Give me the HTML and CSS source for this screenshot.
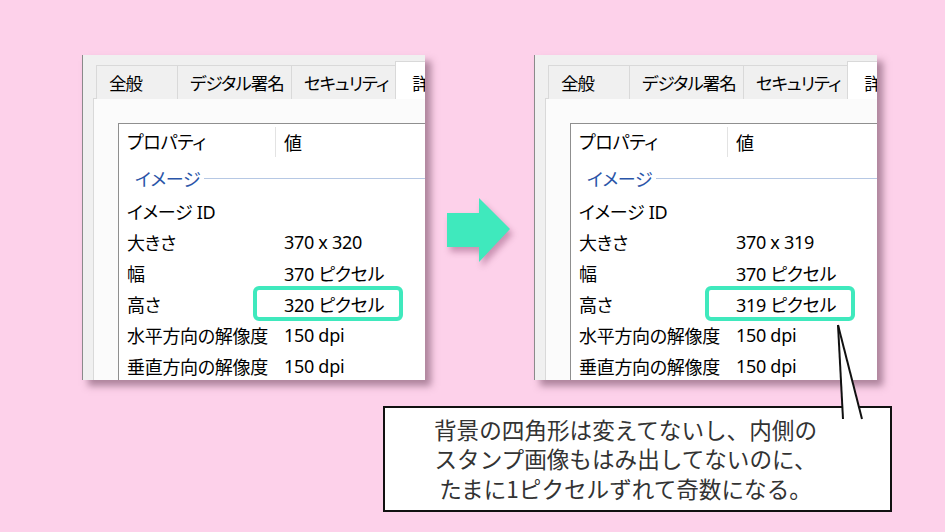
FILE: index.html
```html
<!DOCTYPE html>
<html lang="ja">
<head>
    <meta charset="UTF-8">
    <meta name="viewport" content="width=device-width, initial-scale=1.0">
    <title>プロパティの比較</title>
    <link rel="stylesheet" href="styles.css">
</head>
<body>
    <div class="stage">
        <div class="row">
            <!-- 変更前のプロパティ -->
            <div class="dialog">
                <div class="tabs">
                    <span class="tab">全般</span>
                    <span class="tab">デジタル署名</span>
                    <span class="tab">セキュリティ</span>
                    <span class="tab active">詳細</span>
                </div>
                <div class="page">
                    <div class="list">
                        <div class="list-head"><span class="col-name">プロパティ</span><span class="col-value">値</span></div>
                        <div class="group"><span>イメージ</span></div>
                        <div class="item"><span class="col-name">イメージ ID</span><span class="col-value"></span></div>
                        <div class="item"><span class="col-name">大きさ</span><span class="col-value">370 x 320</span></div>
                        <div class="item"><span class="col-name">幅</span><span class="col-value">370 ピクセル</span></div>
                        <div class="item"><span class="col-name">高さ</span><span class="col-value">320 ピクセル</span><span class="mark"></span></div>
                        <div class="item"><span class="col-name">水平方向の解像度</span><span class="col-value">150 dpi</span></div>
                        <div class="item"><span class="col-name">垂直方向の解像度</span><span class="col-value">150 dpi</span></div>
                    </div>
                </div>
            </div>

            <div class="arrow">
                <svg width="63" height="64" viewBox="0 0 63 64">
                    <polygon points="0,15 32,15 32,0 63,31 32,64 32,49 0,49" fill="#3fe9bd"/>
                </svg>
            </div>

            <!-- 変更後のプロパティ -->
            <div class="dialog">
                <div class="tabs">
                    <span class="tab">全般</span>
                    <span class="tab">デジタル署名</span>
                    <span class="tab">セキュリティ</span>
                    <span class="tab active">詳細</span>
                </div>
                <div class="page">
                    <div class="list">
                        <div class="list-head"><span class="col-name">プロパティ</span><span class="col-value">値</span></div>
                        <div class="group"><span>イメージ</span></div>
                        <div class="item"><span class="col-name">イメージ ID</span><span class="col-value"></span></div>
                        <div class="item"><span class="col-name">大きさ</span><span class="col-value">370 x 319</span></div>
                        <div class="item"><span class="col-name">幅</span><span class="col-value">370 ピクセル</span></div>
                        <div class="item"><span class="col-name">高さ</span><span class="col-value">319 ピクセル</span><span class="mark"></span></div>
                        <div class="item"><span class="col-name">水平方向の解像度</span><span class="col-value">150 dpi</span></div>
                        <div class="item"><span class="col-name">垂直方向の解像度</span><span class="col-value">150 dpi</span></div>
                    </div>
                </div>
            </div>
        </div>

        <div class="callout">
            <p>背景の四角形は変えてないし、内側の<br>スタンプ画像もはみ出してないのに、<br>たまに1ピクセルずれて奇数になる。</p>
            <!-- 吹き出しのしっぽ -->
            <svg class="tail" width="32" height="100" viewBox="0 0 32 100">
                <polygon points="3,3 8,97 27,97" fill="#ffffff"/>
                <line x1="3" y1="3" x2="8" y2="97" stroke="#111" stroke-width="2"/>
                <line x1="3" y1="3" x2="27" y2="97" stroke="#111" stroke-width="2"/>
            </svg>
        </div>
    </div>
</body>
</html>
```

FILE: styles.css
```css
body {
    margin: 0;
    background-color: #fdd1ea;
    font-family: 'Noto Sans', 'Noto Sans CJK JP', sans-serif;
    color: #000000;
}
.stage {
    width: 945px;
    height: 532px;
    padding-top: 55px;
    box-sizing: border-box;
    overflow: hidden;
}
.row {
    display: flex;
    align-items: flex-start;
    padding-left: 82px;
}
.dialog {
    width: 343px;
    height: 325px;
    box-sizing: border-box;
    overflow: hidden;
    padding-top: 6px;
    background-color: #f0f0f0;
    border-left: 1px solid #8a8a8a;
    box-shadow: 6px 6px 7px rgba(95, 55, 80, 0.5);
    font-feature-settings: "palt";
}
.tabs {
    display: flex;
    align-items: flex-end;
    padding-left: 13px;
    white-space: nowrap;
}
.tab {
    height: 34px;
    box-sizing: border-box;
    padding: 0 7px 0 12px;
    border: 1px solid #d9d9d9;
    border-bottom: none;
    margin-right: -1px;
    background-color: #f0f0f0;
    font-size: 17.5px;
    letter-spacing: -1px;
    line-height: 34px;
}
.tab:first-child {
    min-width: 82px;
}
.tab.active {
    height: 38px;
    padding-left: 16px;
    background-color: #ffffff;
    line-height: 42px;
    position: relative;
    z-index: 1;
}
.page {
    margin: -1px 0 0 10px;
    width: 400px;
    height: 300px;
    padding: 24px 0 0 24px;
    background-color: #fbfbfb;
    border-top: 1px solid #d9d9d9;
    border-left: 1px solid #d9d9d9;
}
.list {
    width: 400px;
    height: 300px;
    background-color: #ffffff;
    border-top: 1px solid #8f8f8f;
    border-left: 1px solid #8f8f8f;
    font-size: 18px;
    letter-spacing: -0.3px;
}
.list-head {
    display: flex;
    height: 36px;
    align-items: center;
}
.list-head .col-name {
    height: 30px;
    line-height: 30px;
    border-right: 1px solid #e3e3e3;
}
.col-name {
    width: 157px;
    flex: none;
    box-sizing: border-box;
    padding-left: 8px;
    white-space: nowrap;
}
.col-value {
    padding-left: 8px;
    white-space: nowrap;
}
.group {
    display: flex;
    align-items: center;
    height: 35px;
    padding-left: 16px;
    color: #2a55a8;
}
.group::after {
    content: "";
    flex: 1;
    height: 1px;
    margin: 1px 0 0 4px;
    background-color: #b6c8e4;
}
.item {
    display: flex;
    align-items: center;
    height: 31px;
    position: relative;
}
.mark {
    position: absolute;
    left: 134px;
    top: -2px;
    width: 150px;
    height: 35px;
    box-sizing: border-box;
    border: 4px solid #3fe9bd;
    border-radius: 6px;
}
.arrow {
    margin: 143px 24px 0 22px;
    height: 64px;
    filter: drop-shadow(3px 5px 3px rgba(140, 70, 110, 0.45));
}
.arrow svg {
    display: block;
}
.callout {
    position: relative;
    margin: 26px 0 0 383px;
    width: 509px;
    height: 106px;
    box-sizing: border-box;
    padding-right: 24px;
    display: flex;
    align-items: center;
    justify-content: center;
    background-color: #ffffff;
    border: 2px solid #111111;
}
.callout p {
    margin: 0;
    text-align: center;
    font-family: 'Noto Sans CJK JP', sans-serif;
    font-size: 22.6px;
    line-height: 29.5px;
    color: #333333;
}
.tail {
    position: absolute;
    left: 450px;
    top: -86px;
    overflow: visible;
}
```
